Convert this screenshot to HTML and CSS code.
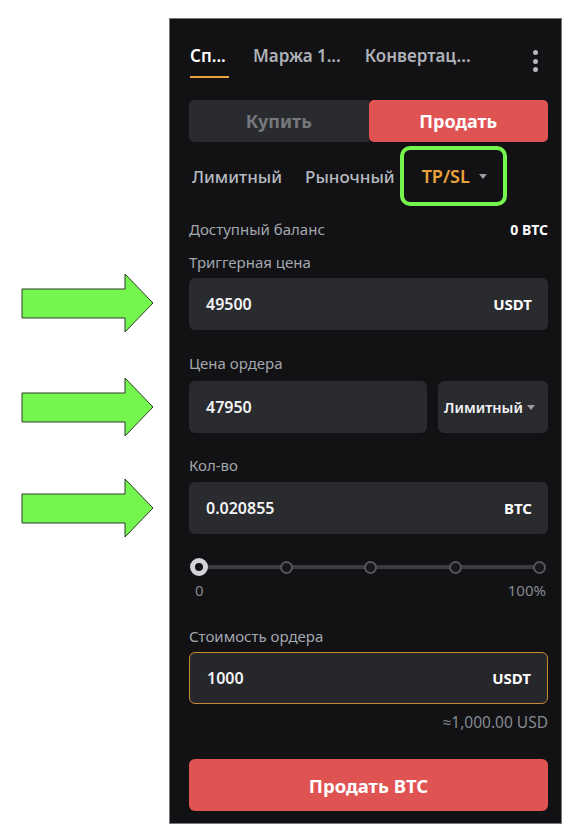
FILE: index.html
```html
<!DOCTYPE html>
<html lang="ru">
<head>
<meta charset="utf-8">
<title>TP/SL</title>
<link rel="stylesheet" href="styles.css">
</head>
<body>
<div class="stage">
  <svg class="arrow arrow-1" width="134" height="60" viewBox="0 0 134 60"><polygon points="1,16 104,16 104,1 132,30 104,59 104,45 1,45" /></svg>
  <svg class="arrow arrow-2" width="134" height="60" viewBox="0 0 134 60"><polygon points="1,16 104,16 104,1 132,30 104,59 104,45 1,45" /></svg>
  <svg class="arrow arrow-3" width="134" height="60" viewBox="0 0 134 60"><polygon points="1,16 104,16 104,1 132,30 104,59 104,45 1,45" /></svg>

  <div class="panel">
    <div class="tabs">
      <div class="tab active">Сп...</div>
      <div class="tab">Маржа 1...</div>
      <div class="tab">Конвертац...</div>
      <div class="kebab"><span></span><span></span><span></span></div>
    </div>

    <div class="side">
      <div class="side-btn buy">Купить</div>
      <div class="side-btn sell">Продать</div>
    </div>

    <div class="types">
      <div class="type type-limit">Лимитный</div>
      <div class="type type-market">Рыночный</div>
      <div class="type-box">
        <span class="type active">TP/SL</span>
        <span class="caret"></span>
      </div>
    </div>

    <div class="balance">
      <span class="label">Доступный баланс</span>
      <span class="balance-val">0 BTC</span>
    </div>

    <div class="label label-trigger">Триггерная цена</div>
    <div class="field field-trigger"><span class="val">49500</span><span class="unit">USDT</span></div>

    <div class="label label-price">Цена ордера</div>
    <div class="price-row">
      <div class="field field-price"><span class="val">47950</span></div>
      <div class="field select"><span class="select-text">Лимитный</span><span class="caret"></span></div>
    </div>

    <div class="label label-qty">Кол-во</div>
    <div class="field field-qty"><span class="val">0.020855</span><span class="unit">BTC</span></div>

    <div class="slider">
      <span class="thumb"></span>
      <span class="dot"></span>
      <span class="dot"></span>
      <span class="dot"></span>
      <span class="dot"></span>
    </div>
    <div class="slider-labels"><span>0</span><span>100%</span></div>

    <div class="label label-total">Стоимость ордера</div>
    <div class="field field-total"><span class="val">1000</span><span class="unit">USDT</span></div>
    <div class="approx">≈1,000.00 USD</div>

    <div class="submit">Продать BTC</div>
  </div>
</div>
</body>
</html>
```

FILE: styles.css
```css
* { box-sizing: border-box; }

html, body {
  margin: 0;
  padding: 0;
  background: #ffffff;
}

body {
  font-family: "Noto Sans", "Open Sans", sans-serif;
  color: #eaecef;
}

.stage {
  position: relative;
  width: 574px;
  height: 838px;
  padding: 18px 0 0 169px;
}

.arrow {
  position: absolute;
  left: 21px;
}
.arrow polygon {
  fill: #74f64e;
  stroke: #2f3a2b;
  stroke-width: 1;
}
.arrow-1 { top: 273px; }
.arrow-2 { top: 377px; }
.arrow-3 { top: 478px; }

.panel {
  width: 393px;
  height: 806px;
  background: #121215;
  border: 1px solid #77787c;
  padding: 25px 13px 12px 19px;
}

/* tabs */
.tabs {
  display: flex;
  align-items: flex-start;
  gap: 23px;
  height: 34px;
}
.tab {
  font-size: 17px;
  font-weight: 600;
  line-height: 24px;
  color: #aeb1b7;
  padding-left: 1px;
}
.tab.active {
  color: #ffffff;
}
.tab.active::after {
  content: "";
  display: block;
  height: 2px;
  width: 39px;
  margin-top: 8px;
  background: #e9a33a;
}
.kebab {
  margin-left: auto;
  display: flex;
  flex-direction: column;
  gap: 3.5px;
  padding: 6px 10px 0 0;
}
.kebab span {
  width: 5px;
  height: 5px;
  border-radius: 50%;
  background: #b6b8bd;
}

/* side toggle */
.side {
  display: flex;
  margin-top: 22px;
  height: 42px;
}
.side-btn {
  flex: 1;
  display: flex;
  align-items: center;
  justify-content: center;
  font-size: 18px;
  font-weight: 700;
}
.buy {
  background: #2a2b2f;
  color: #76787d;
  border-radius: 5px 0 0 5px;
}
.sell {
  background: #e05353;
  color: #ffffff;
  border-radius: 5px;
}

/* order types */
.types {
  display: flex;
  align-items: center;
  margin-top: 4px;
  height: 60px;
}
.type {
  font-size: 17px;
  font-weight: 500;
  color: #b7bac0;
}
.type-limit { padding-left: 3px; }
.type-market { margin-left: 23px; }
.type-box {
  display: flex;
  align-items: center;
  height: 60px;
  margin-left: 5px;
  border: 4px solid #74f64e;
  border-radius: 10px;
  padding: 0 16px 0 18px;
  gap: 9px;
}
.type.active {
  color: #eba23a;
  font-weight: 600;
  font-size: 18px;
}
.caret {
  width: 0;
  height: 0;
  border-left: 4px solid transparent;
  border-right: 4px solid transparent;
  border-top: 5px solid #9a9ca1;
}

/* labels */
.label {
  font-size: 15px;
  line-height: 20px;
  color: #a3a7ae;
}
.balance {
  display: flex;
  justify-content: space-between;
  align-items: center;
  margin-top: 13px;
  height: 20px;
}
.balance-val {
  font-size: 14px;
  font-weight: 700;
  color: #ffffff;
}
.label-trigger { margin-top: 13px; }
.label-price { margin-top: 23px; }
.label-qty { margin-top: 22px; }
.label-total { margin-top: 28px; }

/* fields */
.field {
  display: flex;
  align-items: center;
  justify-content: space-between;
  height: 52px;
  background: #2a2b2f;
  border-radius: 6px;
  padding: 0 16px 0 17px;
}
.field-trigger { margin-top: 6px; }
.field-qty { margin-top: 7px; }
.val {
  font-size: 16px;
  font-weight: 600;
  color: #f2f3f5;
}
.unit {
  font-size: 15px;
  font-weight: 700;
  color: #ffffff;
}

.price-row {
  display: flex;
  gap: 11px;
  margin-top: 8px;
}
.field-price { flex: 0 0 238px; }
.select {
  flex: 1;
  padding: 0 0 0 6px;
  justify-content: flex-start;
  gap: 4px;
}
.select-text {
  font-size: 14.5px;
  font-weight: 600;
  color: #f2f3f5;
}

/* slider */
.slider {
  display: flex;
  justify-content: space-between;
  align-items: center;
  height: 18px;
  margin-top: 24px;
  margin-left: 1px;
  width: 356px;
  background: linear-gradient(#3b3c41, #3b3c41) center / calc(100% - 14px) 4px no-repeat;
}
.thumb {
  width: 18px;
  height: 18px;
  border-radius: 50%;
  background: #131316;
  border: 5px solid #d3d4d9;
}
.dot {
  width: 13px;
  height: 13px;
  border-radius: 50%;
  background: #17171b;
  border: 2px solid #55565b;
}
.slider-labels {
  display: flex;
  justify-content: space-between;
  width: 357px;
  margin-top: 6px;
  padding-left: 6px;
  font-size: 15px;
  line-height: 16px;
  color: #858990;
}

.field-total {
  margin-top: 6px;
  border: 1px solid #c48a33;
  background: #26272b;
}

.approx {
  margin-top: 9px;
  text-align: right;
  font-size: 15.5px;
  line-height: 18px;
  color: #858990;
}

.submit {
  margin-top: 28px;
  height: 52px;
  border-radius: 6px;
  background: #e05353;
  color: #ffffff;
  font-size: 18.5px;
  font-weight: 700;
  display: flex;
  align-items: center;
  justify-content: center;
}
```
